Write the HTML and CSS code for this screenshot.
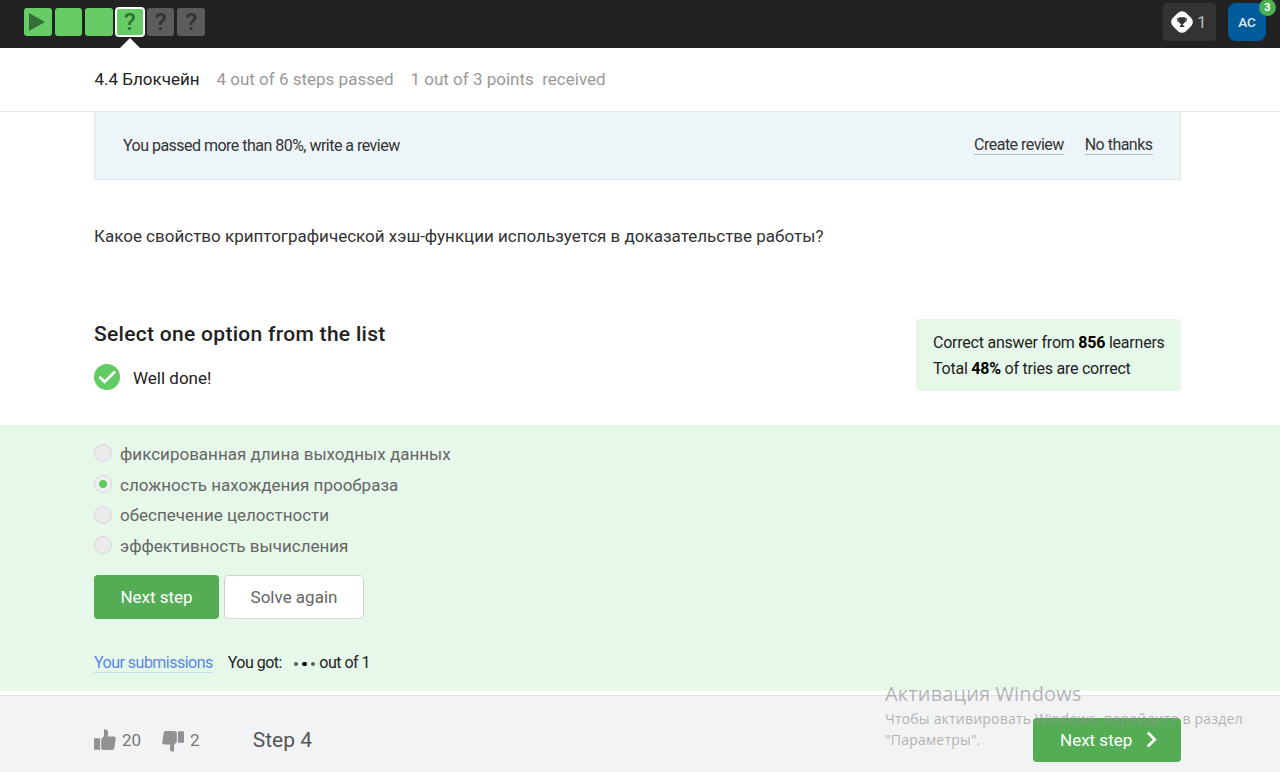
FILE: index.html
```html
<!DOCTYPE html>
<html lang="en">
<head>
<meta charset="utf-8">
<title>4.4 Блокчейн</title>
<link rel="stylesheet" href="styles.css">
</head>
<body>
<div class="page">
  <header class="topbar">
    <nav class="steps">
      <a class="step"><svg class="play" viewBox="0 0 16 20"><path d="M0 1L16 10L0 19Z"/></svg></a>
      <a class="step"></a>
      <a class="step"></a>
      <a class="step step-current"><span class="mark">?</span></a>
      <a class="step step-todo"><span class="mark">?</span></a>
      <a class="step step-todo"><span class="mark">?</span></a>
    </nav>
    <div class="account">
      <div class="rating">
        <svg class="trophy" viewBox="0 0 22 22"><rect x="1.700" y="1.700" width="18.600" height="18.600" rx="5.600" fill="#fff" transform="rotate(45 11 11)"/><path d="M7.800 6.200h6.400v1h1.900c.1 2.600-.8 3.900-2.500 4.200-.4.900-1 1.400-1.700 1.700v1.500h1.400v1.300H8.700v-1.300h1.400v-1.500c-.7-.3-1.300-.8-1.700-1.700-1.700-.3-2.600-1.600-2.500-4.200h1.900z" fill="#333"/><path d="M6.800 8.100c.1 1.100.5 1.800 1.200 2.100M15.200 8.100c-.1 1.100-.5 1.800-1.200 2.100" fill="none" stroke="#fff" stroke-width=".5"/></svg>
        <span>1</span>
      </div>
      <div class="avatar">AC<span class="badge">3</span></div>
    </div>
  </header>

  <section class="lesson">
    <span class="lesson-title">4.4 Блокчейн</span>
    <span class="lesson-steps">4 out of 6 steps passed</span>
    <span class="lesson-points">1 out of 3 points&nbsp; received</span>
  </section>

  <main class="content">
    <div class="review">
      <span class="review-text">You passed more than 80%, write a review</span>
      <a class="review-link create">Create review</a>
      <a class="review-link decline">No thanks</a>
    </div>
    <p class="question">Какое свойство криптографической хэш-функции используется в доказательстве работы?</p>
    <div class="result">
      <div>
        <h2 class="result-title">Select one option from the list</h2>
        <div class="verdict">
          <svg class="check" viewBox="0 0 26 26"><circle cx="13" cy="13" r="13" fill="#62cc64"/><path d="M5.300 12.800L10.700 18L21 7.500" fill="none" stroke="#fff" stroke-width="2.600"/></svg>
          <span class="verdict-text">Well done!</span>
        </div>
      </div>
      <div class="stats">
        <div class="stat-learners">Correct answer from <b>856</b> learners</div>
        <div class="stat-tries">Total <b>48%</b> of tries are correct</div>
      </div>
    </div>
  </main>

  <section class="quiz">
    <div class="option"><i class="radio"></i><span class="option-text">фиксированная длина выходных данных</span></div>
    <div class="option"><i class="radio radio-on"></i><span class="option-text">сложность нахождения прообраза</span></div>
    <div class="option"><i class="radio"></i><span class="option-text">обеспечение целостности</span></div>
    <div class="option"><i class="radio"></i><span class="option-text">эффективность вычисления</span></div>
    <div class="actions">
      <button class="btn btn-next">Next step</button>
      <button class="btn btn-again">Solve again</button>
    </div>
    <div class="score">
      <a class="submissions">Your submissions</a>
      <span class="got">You got:</span>
      <span class="dots"><i></i><i class="dot-dark"></i><i></i></span>
      <span class="total">out of 1</span>
    </div>
  </section>

  <footer class="footer">
    <svg class="thumb" viewBox="0 0 22 22"><path d="M.8 9.300h4.500a.8.800 0 0 1 .8.800v10.700H.8a.8.800 0 0 1-.8-.8V10.100a.8.800 0 0 1 .8-.8z"/><path d="M7.200 10.200L10 7V1.500Q10 .3 11.300.3Q14.200.8 14.200 4L13.700 7.600H20Q22 7.800 21.700 9.600L20.300 19.200Q20 21 18.300 21H9.500L7.200 19.900Z"/></svg>
    <span class="likes">20</span>
    <svg class="thumb thumb-down" viewBox="0 0 22 22"><path d="M.8 9.300h4.500a.8.800 0 0 1 .8.800v10.700H.8a.8.800 0 0 1-.8-.8V10.100a.8.800 0 0 1 .8-.8z"/><path d="M7.200 10.200L10 7V1.500Q10 .3 11.300.3Q14.200.8 14.200 4L13.700 7.600H20Q22 7.800 21.700 9.600L20.300 19.200Q20 21 18.300 21H9.500L7.200 19.900Z"/></svg>
    <span class="dislikes">2</span>
    <span class="step-name">Step 4</span>
    <button class="btn footer-next">Next step<svg class="chevron" viewBox="0 0 10 16"><path d="M1.500 1.500L8 8L1.500 14.500"/></svg></button>
  </footer>

  <div class="watermark">
    <div class="wm-title">Активация Windows</div>
    <div class="wm-line1">Чтобы активировать Windows, перейдите в раздел</div>
    <div class="wm-line2">"Параметры".</div>
  </div>
</div>
</body>
</html>
```
FILE: styles.css
```css
* { box-sizing: border-box; }
body { margin: 0; background: #fff; }
.page {
  position: relative;
  width: 1280px;
  height: 772px;
  overflow: hidden;
  font-family: Roboto, "Noto Sans", sans-serif;
  font-size: 17px;
  color: #222;
  white-space: nowrap;
}
svg { display: block; flex: none; }

.topbar {
  height: 48px;
  padding: 0 14px 0 24px;
  background: #222;
  display: flex;
  justify-content: space-between;
}
.steps { display: flex; gap: 3px; padding-top: 8px; }
.step {
  position: relative;
  width: 27.700px;
  height: 28px;
  border-radius: 3px;
  background: #66cc66;
  color: #2f6f30;
  display: flex;
  align-items: center;
  justify-content: center;
}
.play { width: 16px; height: 20px; margin-right: 1px; fill: #347034; }
.mark { font-size: 24px; line-height: 28px; font-weight: 500; }
.step-current { box-shadow: 0 0 0 1px #fff, inset 0 0 0 1px #fff; }
.step-current::after {
  content: "";
  position: absolute;
  left: 4px;
  top: 30px;
  border: 10px solid transparent;
  border-top: 0;
  border-bottom-color: #fff;
}
.step-todo { background: #5c5c5c; color: #303030; }

.account { display: flex; gap: 12px; padding-top: 3px; }
.rating {
  width: 53px;
  height: 38px;
  border-radius: 4px;
  background: #333;
  color: #bbb;
  display: flex;
  align-items: center;
  gap: 4px;
  padding-left: 8px;
}
.trophy { width: 22px; height: 22px; }
.avatar {
  position: relative;
  width: 38px;
  height: 38px;
  border-radius: 8px;
  background: #005b9a;
  color: #dfeaf3;
  font-size: 13.500px;
  font-weight: 500;
  line-height: 38px;
  text-align: center;
}
.badge {
  position: absolute;
  left: 31px;
  top: -4px;
  width: 17px;
  height: 17px;
  border-radius: 50%;
  background: #4caf50;
  color: #fff;
  font-size: 11px;
  font-weight: 700;
  line-height: 17px;
}

.lesson {
  height: 64px;
  padding: 0 94.500px 2px;
  border-bottom: 1px solid #e6e6e6;
  display: flex;
  align-items: center;
  color: #999;
}
.lesson-title { width: 122px; color: #222; }
.lesson-steps { width: 194px; }

.content { height: 313px; padding: 0 99px 0 94px; }
.review {
  height: 68px;
  border: 1px solid #dfe5e9;
  border-top: 0;
  background: #edf5f9;
  display: flex;
  align-items: center;
  padding: 0 27.500px 0 28px;
  font-size: 16px;
  letter-spacing: -.52px;
  color: #333;
}
.review-text { flex: 1; }
.review-link { border-bottom: 1px solid #b5bbbf; line-height: 18px; }
.decline { margin-left: 21px; }
.question { margin: 46px 0 0; line-height: 20px; color: #333; }
.result {
  margin-top: 73px;
  display: flex;
  justify-content: space-between;
  align-items: flex-start;
}
.result-title { margin: 3px 0 0; font-size: 21px; letter-spacing: .3px; line-height: 24px; font-weight: 500; }
.verdict { display: flex; align-items: center; gap: 13px; margin-top: 18px; }
.verdict-text { padding-top: 2px; }
.check { width: 26px; height: 26px; }
.stats {
  width: 265px;
  height: 72px;
  padding: 11px 17px;
  border-radius: 4px;
  background: #e6f8e9;
  font-size: 16px;
  letter-spacing: -.23px;
  line-height: 25.500px;
}
.stats b { color: #000; }

.quiz {
  height: 266px;
  padding: 13px 94px 0;
  background: #e6f8e9;
}
.option {
  height: 30.700px;
  display: flex;
  align-items: center;
  gap: 8px;
  color: #666;
}
.option-text { padding-top: 1px; }
.radio {
  width: 18px;
  height: 18px;
  border: 1px solid #d5d7d7;
  border-radius: 50%;
  background: #ebebee;
}
.radio-on { background: radial-gradient(circle, #5bcb5d 3.500px, #f0f0f2 4.500px); }
.actions { display: flex; gap: 5px; margin-top: 14px; }
.btn {
  height: 44px;
  padding: 0;
  border: 0;
  border-radius: 4px;
  background: #54ad54;
  color: #fff;
  font: 17px Roboto, sans-serif;
}
.btn-next { width: 125px; }
.btn-again { width: 140px; background: #fff; border: 1px solid #ccd8ce; color: #666; }
.score {
  display: flex;
  align-items: center;
  margin-top: 35px;
  font-size: 16px;
  letter-spacing: -.52px;
  line-height: 18px;
}
.submissions { color: #5b87e8; border-bottom: 1px solid #c4d9ed; }
.got { margin-left: 15px; }
.dots { display: flex; gap: 4px; margin: 1px 4px 0 12px; }
.dots i { width: 4.500px; height: 4.500px; border-radius: 50%; background: #586258; }
.dots .dot-dark { background: #000; }

.footer {
  height: 77px;
  margin-top: 4px;
  border-top: 1px solid #e1e3e6;
  background: #f2f3f5;
  padding: 11px 99px 0 94px;
  display: flex;
  align-items: center;
  color: #777;
}
.thumb { width: 22px; height: 22px; fill: #929294; }
.thumb-down { transform: rotate(180deg); margin: 2px 0 0 21px; }
.likes { margin-left: 6px; padding-top: 1px; }
.dislikes { margin-left: 6px; padding-top: 1px; }
.step-name { margin-left: 53px; padding-top: 1px; color: #555; font-size: 21px; }
.footer-next {
  width: 148px;
  margin-left: auto;
  display: flex;
  align-items: center;
  padding-left: 27px;
}
.chevron { width: 11px; height: 17px; margin-left: 14px; fill: none; stroke: #fff; stroke-width: 2.600; }

.watermark {
  position: absolute;
  left: 885px;
  top: 679.500px;
  font-family: "Open Sans", "Noto Sans", sans-serif;
  font-size: 14px;
  letter-spacing: .2px;
  line-height: 21.500px;
  color: rgba(150, 150, 150, .7);
}
.wm-title { font-size: 20px; letter-spacing: .13px; line-height: 28px; }
```
